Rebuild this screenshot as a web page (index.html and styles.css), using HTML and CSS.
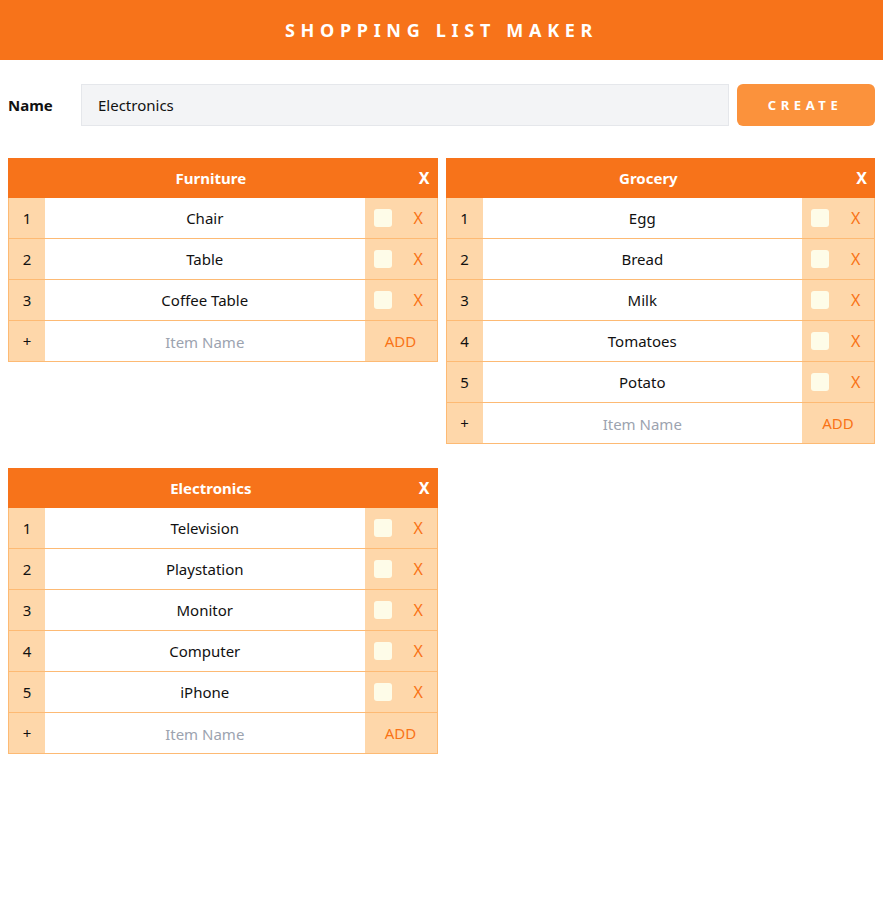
FILE: index.html
```html
<!DOCTYPE html>
<html>
<head>
<meta charset="utf-8">
<link rel="stylesheet" href="styles.css">
</head>
<body>
<header class="topbar"><h1 class="title">SHOPPING LIST MAKER</h1></header>
<form class="create-row">
  <label class="name-label">Name</label>
  <input class="name-input" type="text" value="Electronics">
  <button class="create-btn" type="button">CREATE</button>
</form>
<main class="lists">
  <section class="list">
    <div class="list-head"><span class="list-title">Furniture</span><span class="list-del">X</span></div>
    <div class="row"><span class="num">1</span><span class="item">Chair</span><span class="act"><span class="check"></span><span class="rm">X</span></span></div>
    <div class="row"><span class="num">2</span><span class="item">Table</span><span class="act"><span class="check"></span><span class="rm">X</span></span></div>
    <div class="row"><span class="num">3</span><span class="item">Coffee Table</span><span class="act"><span class="check"></span><span class="rm">X</span></span></div>
    <div class="row"><span class="num">+</span><span class="item ph">Item Name</span><span class="act add">ADD</span></div>
  </section>
  <section class="list">
    <div class="list-head"><span class="list-title">Grocery</span><span class="list-del">X</span></div>
    <div class="row"><span class="num">1</span><span class="item">Egg</span><span class="act"><span class="check"></span><span class="rm">X</span></span></div>
    <div class="row"><span class="num">2</span><span class="item">Bread</span><span class="act"><span class="check"></span><span class="rm">X</span></span></div>
    <div class="row"><span class="num">3</span><span class="item">Milk</span><span class="act"><span class="check"></span><span class="rm">X</span></span></div>
    <div class="row"><span class="num">4</span><span class="item">Tomatoes</span><span class="act"><span class="check"></span><span class="rm">X</span></span></div>
    <div class="row"><span class="num">5</span><span class="item">Potato</span><span class="act"><span class="check"></span><span class="rm">X</span></span></div>
    <div class="row"><span class="num">+</span><span class="item ph">Item Name</span><span class="act add">ADD</span></div>
  </section>
  <section class="list">
    <div class="list-head"><span class="list-title">Electronics</span><span class="list-del">X</span></div>
    <div class="row"><span class="num">1</span><span class="item">Television</span><span class="act"><span class="check"></span><span class="rm">X</span></span></div>
    <div class="row"><span class="num">2</span><span class="item">Playstation</span><span class="act"><span class="check"></span><span class="rm">X</span></span></div>
    <div class="row"><span class="num">3</span><span class="item">Monitor</span><span class="act"><span class="check"></span><span class="rm">X</span></span></div>
    <div class="row"><span class="num">4</span><span class="item">Computer</span><span class="act"><span class="check"></span><span class="rm">X</span></span></div>
    <div class="row"><span class="num">5</span><span class="item">iPhone</span><span class="act"><span class="check"></span><span class="rm">X</span></span></div>
    <div class="row"><span class="num">+</span><span class="item ph">Item Name</span><span class="act add">ADD</span></div>
  </section>
</main>
</body>
</html>
```

FILE: styles.css
```css
* { box-sizing: border-box; }
html, body { margin: 0; padding: 0; }
body {
  font-family: "Noto Sans", "Open Sans", sans-serif;
  font-size: 15px;
  color: #111;
  background: #fff;
}
.topbar {
  background: #f7731a;
  height: 60px;
  display: flex;
  align-items: center;
  justify-content: center;
}
.title {
  margin: 0;
  color: #fff;
  font-size: 18px;
  font-weight: 700;
  letter-spacing: 5.7px;
}
.create-row {
  display: flex;
  align-items: center;
  margin: 24px 8px 0 8px;
  height: 42px;
}
.name-label {
  width: 73px;
  font-weight: 700;
  font-size: 15px;
}
.name-input {
  flex: 1;
  height: 42px;
  background: #f3f4f6;
  border: 1px solid #e5e7eb;
  padding: 0 16px;
  font-family: inherit;
  font-size: 15px;
  color: #111;
  outline: none;
}
.create-btn {
  margin-left: 8px;
  width: 138px;
  height: 42px;
  border: none;
  border-radius: 6px;
  background: #fb923c;
  color: #fff;
  font-family: inherit;
  font-weight: 700;
  font-size: 13px;
  letter-spacing: 4.6px;
  padding-left: 4px;
}
.lists {
  display: grid;
  grid-template-columns: 1fr 1fr;
  column-gap: 8px;
  row-gap: 24px;
  align-items: start;
  margin: 32px 8px 0 8px;
}
.list-head {
  display: flex;
  align-items: center;
  height: 40px;
  background: #f7731a;
  color: #fff;
  font-weight: 700;
}
.list-title {
  flex: 1;
  text-align: center;
  font-size: 15px;
  padding-left: 4px;
}
.list-del {
  font-size: 16px;
  padding: 0 8px 0 9px;
}
.row {
  display: grid;
  grid-template-columns: 36px 1fr 72px;
  height: 41px;
  border: 1px solid #fdba74;
  border-top: none;
}
.row > span {
  display: flex;
  align-items: center;
  justify-content: center;
}
.num { background: #fed7aa; }
.item { background: #fff; }
.act { background: #fed7aa; }
.row > .act { justify-content: flex-start; padding-left: 9px; }
.row > .act.add { justify-content: center; padding-left: 0; color: #f97316; font-size: 15px; }
.check {
  display: inline-block;
  width: 18px;
  height: 18px;
  border-radius: 3px;
  background: #fefce8;
}
.rm {
  color: #f97316;
  font-size: 16px;
  margin-left: 22px;
}
.ph { color: #9ca3af; padding-top: 1px; }
```
